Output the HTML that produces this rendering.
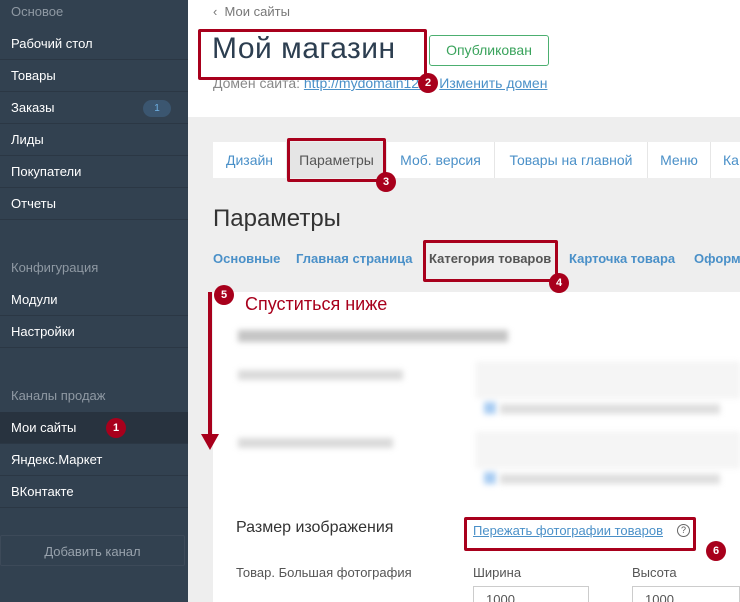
<!DOCTYPE html>
<html style="overflow:hidden;width:740px;height:602px"><head><meta charset="utf-8"><style>
*{margin:0;padding:0;box-sizing:border-box}
body{width:740px;height:602px;overflow:hidden;position:relative;font-family:"Liberation Sans","DejaVu Sans",sans-serif;background:#eee}
.sb{position:absolute;left:0;top:0;width:188px;height:602px;background:#324150}
.sb div{position:absolute;left:0;width:188px;height:32px;line-height:32px;padding-left:11px;color:#fff;font-size:13px;border-bottom:1px solid #2b3744}
.sb .h{color:#8f99a3;border:none}
.a{position:absolute}
.red{position:absolute;border:3px solid #a8001c;border-radius:2px}
.bd{position:absolute;width:20px;height:20px;border-radius:50%;background:#a8001c;color:#fff;font-size:11px;font-weight:bold;text-align:center;line-height:20px}
.tab{position:absolute;top:142px;height:36px;line-height:36px;font-size:14px;color:#4a90c8;text-align:center;background:#fff;border-right:1px solid #e6e6e6}
.st{position:absolute;top:251px;font-size:13px;font-weight:bold;color:#4a90c8}
.bl{position:absolute;background:#ddd;filter:blur(3px);height:10px}
</style></head><body>
<div class="sb">
<div class="h" style="top:-4px">Основое</div>
<div style="top:28px">Рабочий стол</div>
<div style="top:60px">Товары</div>
<div style="top:92px">Заказы<span style="position:absolute;left:143px;top:8px;width:28px;height:17px;border-radius:9px;background:#3b5670;color:#6fb2e6;font-size:10px;line-height:17px;text-align:center">1</span></div>
<div style="top:124px">Лиды</div>
<div style="top:156px">Покупатели</div>
<div style="top:188px">Отчеты</div>
<div class="h" style="top:252px">Конфигурация</div>
<div style="top:284px">Модули</div>
<div style="top:316px">Настройки</div>
<div class="h" style="top:380px">Каналы продаж</div>
<div style="top:412px;background:#28333f">Мои сайты</div>
<div style="top:444px">Яндекс.Маркет</div>
<div style="top:476px">ВКонтакте</div>
<div style="top:535px;left:0;width:185px;height:31px;line-height:31px;border:1px solid #3d4a59;color:#98a2ac;text-align:center;padding:0;border-radius:2px">Добавить канал</div>
</div>
<div class="a" style="left:188px;top:0;width:552px;height:117px;background:#fff"></div>
<div class="a" style="left:213px;top:4px;font-size:13px;color:#777">‹&nbsp; Мои сайты</div>
<div class="a" style="left:212px;top:32px;font-size:30px;color:#2c3e50;letter-spacing:0.5px">Мой магазин</div>
<div class="a" style="left:429px;top:35px;width:120px;height:31px;border:1px solid #4caf70;border-radius:3px;color:#3aa35c;font-size:14px;line-height:29px;text-align:center">Опубликован</div>
<div class="a" style="left:213px;top:75px;font-size:14px;color:#888">Домен сайта: <span style="color:#4a90c8;text-decoration:underline">http://mydomain12.ru</span> <span style="color:#4a90c8;text-decoration:underline">Изменить домен</span></div>
<div class="tab" style="left:213px;width:74px">Дизайн</div>
<div class="tab" style="left:287px;width:100px;background:#e5e5e5;color:#555">Параметры</div>
<div class="tab" style="left:387px;width:108px">Моб. версия</div>
<div class="tab" style="left:495px;width:153px">Товары на главной</div>
<div class="tab" style="left:648px;width:63px">Меню</div>
<div class="tab" style="left:711px;width:40px;text-align:left;padding-left:12px">Ка</div>
<div class="a" style="left:213px;top:205px;font-size:24px;color:#333">Параметры</div>
<div class="st" style="left:213px">Основные</div>
<div class="st" style="left:296px">Главная страница</div>
<div class="st" style="left:429px;color:#555">Категория товаров</div>
<div class="st" style="left:569px">Карточка товара</div>
<div class="st" style="left:694px">Оформ</div>
<div class="a" style="left:213px;top:292px;width:527px;height:310px;background:#fff"></div>
<div class="bl" style="left:238px;top:330px;width:270px;height:12px;background:#c4c4c4"></div>
<div class="bl" style="left:238px;top:370px;width:165px;background:#dadada"></div>
<div class="bl" style="left:476px;top:362px;width:264px;height:36px;background:#f5f5f5;border:1px solid #eee"></div>
<div class="bl" style="left:484px;top:402px;width:12px;height:12px;background:#a8ccf2"></div>
<div class="bl" style="left:500px;top:404px;width:220px;background:#dedede"></div>
<div class="bl" style="left:238px;top:438px;width:155px;background:#dadada"></div>
<div class="bl" style="left:476px;top:432px;width:264px;height:36px;background:#f5f5f5;border:1px solid #eee"></div>
<div class="bl" style="left:484px;top:472px;width:12px;height:12px;background:#a8ccf2"></div>
<div class="bl" style="left:500px;top:474px;width:220px;background:#dedede"></div>
<div class="a" style="left:236px;top:519px;font-size:16px;color:#333">Размер изображения</div>
<div class="a" style="left:473px;top:523px;font-size:13px;color:#4a90c8;text-decoration:underline">Пережать фотографии товаров</div>
<div class="a" style="left:677px;top:524px;width:13px;height:13px;border:1px solid #666;border-radius:50%;font-size:9px;line-height:11px;text-align:center;color:#555">?</div>
<div class="a" style="left:236px;top:565px;font-size:13px;color:#555">Товар. Большая фотография</div>
<div class="a" style="left:473px;top:565px;font-size:13px;color:#555">Ширина</div>
<div class="a" style="left:632px;top:565px;font-size:13px;color:#555">Высота</div>
<div class="a" style="left:473px;top:586px;width:116px;height:16px;border:1px solid #ccc;border-bottom:none;font-size:13px;padding:5px 12px 0;color:#555;overflow:hidden">1000</div>
<div class="a" style="left:632px;top:586px;width:108px;height:16px;border:1px solid #ccc;border-bottom:none;font-size:13px;padding:5px 12px 0;color:#555;overflow:hidden">1000</div>
<!-- annotations -->
<div class="red" style="left:198px;top:29px;width:229px;height:51px"></div>
<div class="bd" style="left:418px;top:73px">2</div>
<div class="red" style="left:287px;top:138px;width:99px;height:44px"></div>
<div class="bd" style="left:376px;top:172px">3</div>
<div class="red" style="left:423px;top:240px;width:135px;height:42px"></div>
<div class="bd" style="left:549px;top:273px">4</div>
<div class="a" style="left:208px;top:292px;width:4px;height:145px;background:#a8001c"></div>
<div class="a" style="left:201px;top:434px;width:0;height:0;border-left:9px solid transparent;border-right:9px solid transparent;border-top:16px solid #a8001c"></div>
<div class="bd" style="left:214px;top:285px">5</div>
<div class="a" style="left:245px;top:294px;font-size:18px;color:#a8001c">Спуститься ниже</div>
<div class="red" style="left:464px;top:517px;width:232px;height:34px"></div>
<div class="bd" style="left:706px;top:541px">6</div>
<div class="bd" style="left:106px;top:418px">1</div>
</body></html>
